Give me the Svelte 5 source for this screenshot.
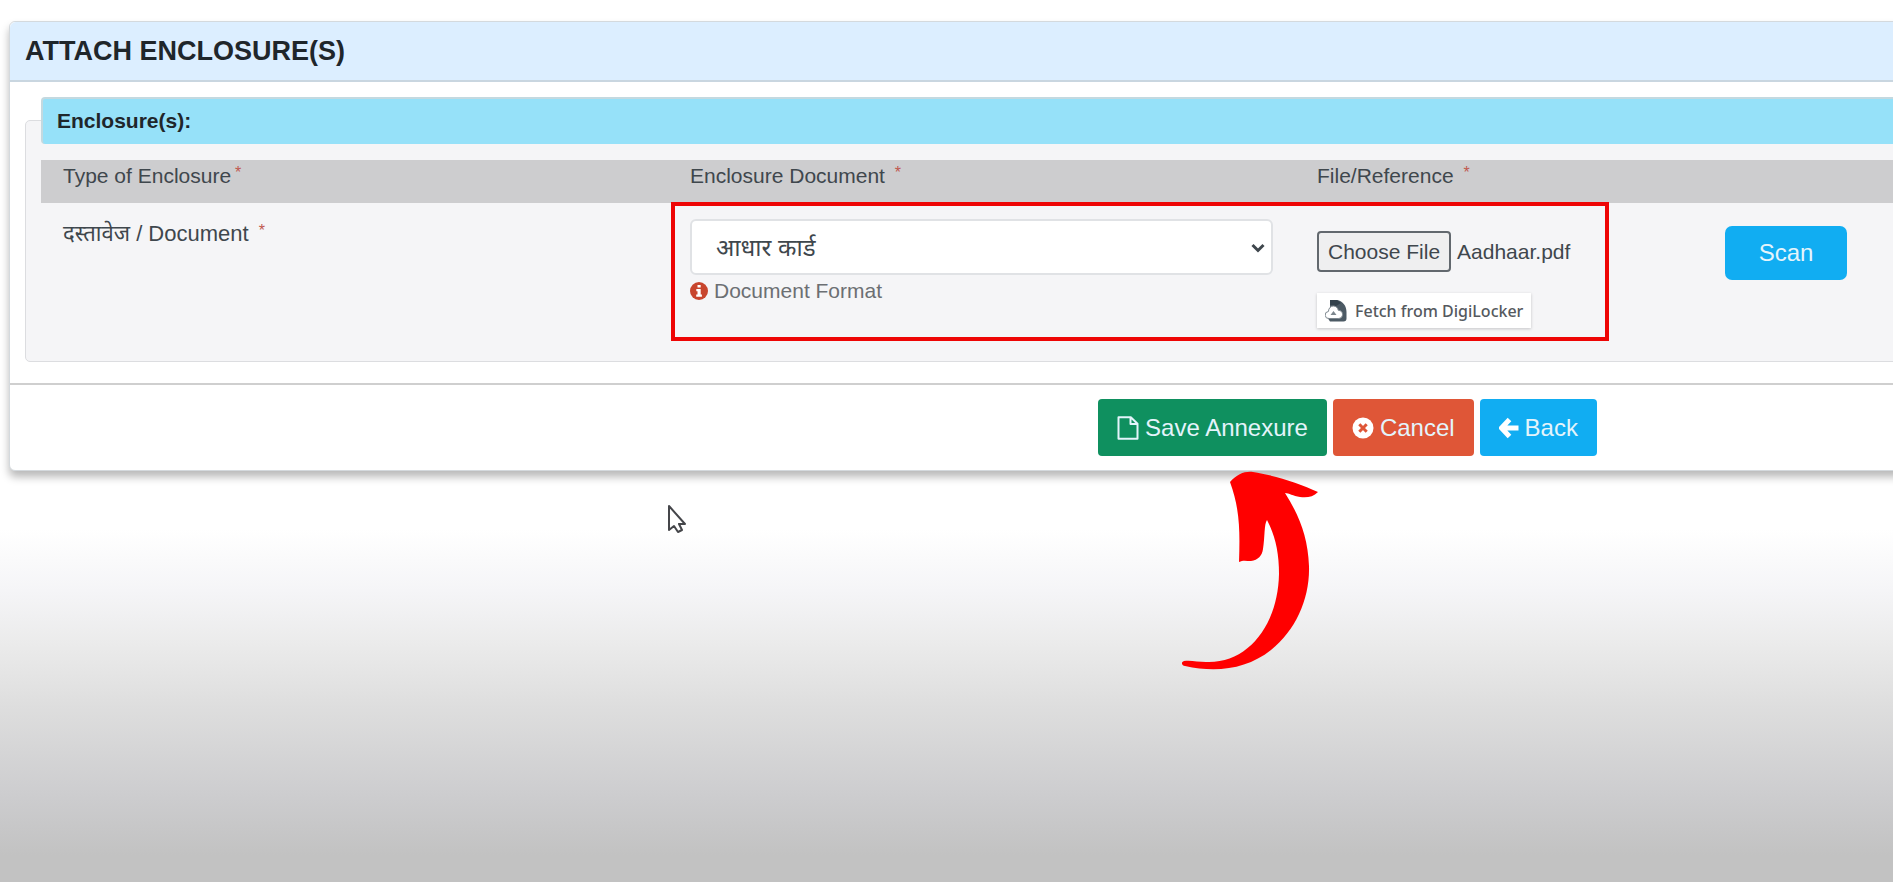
<script>
	import { onMount } from 'svelte';

	const documents = ['आधार कार्ड', 'पैन कार्ड', 'राशन कार्ड'];

	let selected = documents[0];
	let fileInput;

	onMount(() => {
		const transfer = new DataTransfer();
		transfer.items.add(new File([''], 'Aadhaar.pdf', { type: 'application/pdf' }));
		fileInput.files = transfer.files;
	});
</script>

<main>
	<section class="card">
		<header>
			<h1>ATTACH ENCLOSURE(S)</h1>
		</header>

		<div class="card-body">
			<div class="group">
				<h2>Enclosure(s):</h2>
				<div class="table-wrap">
					<table>
						<thead>
							<tr>
								<th>Type of Enclosure <span class="required near">*</span></th>
								<th>Enclosure Document <span class="required">*</span></th>
								<th>File/Reference <span class="required">*</span></th>
							</tr>
						</thead>
						<tbody>
							<tr>
								<td>
									<label class="type" for="document">दस्तावेज / Document <span class="required">*</span></label>
								</td>
								<td>
									<div class="select-wrap">
										<select id="document" bind:value={selected}>
											{#each documents as name}
												<option value={name}>{name}</option>
											{/each}
										</select>
										<svg class="chevron" viewBox="0 0 14 10" aria-hidden="true">
											<path d="M1.5 2l5.500 5.500L12.500 2" fill="none" stroke="#3f474d" stroke-width="3" />
										</svg>
									</div>
									<a class="format" href="#format">
										<svg viewBox="0 0 18 18" aria-hidden="true">
											<circle cx="9" cy="9" r="9" fill="#c8452d" />
											<path d="M7.500 3h3.200v2.600H7.500zM6.300 7h4.400v5.500h1.200v2.200H6.200v-2.200h1.300V9.200H6.300z" fill="#fff" />
										</svg>
										Document Format
									</a>
								</td>
								<td>
									<div class="reference">
										<div class="sources">
											<input type="file" aria-label="File/Reference" bind:this={fileInput} />
											<button class="fetch" type="button">
												<svg viewBox="0 0 22 22" aria-hidden="true">
													<path d="M5 0h7c6 1 9.500 6 9.500 12v6.500a3 3 0 0 1-3 3H5L2 17l3-8z" fill="#4c5a64" />
													<path d="M5 0h7l4 3-5 3-6-1z" fill="#34424c" />
													<path d="M4 18.500a3.500 3.500 0 0 1-.6-7c.3-3.500 2.300-5.500 4.900-5.500 2.700 0 4.500 1.800 5 4.300 2.700.1 4.300 1.900 4.300 4.100s-1.700 4.100-4.200 4.100z" fill="#fff" stroke="#7d878e" />
													<path d="M8.500 11l3 4h-6z" fill="#7d878e" />
												</svg>
												Fetch from DigiLocker
											</button>
										</div>
										<button class="btn scan" type="button">Scan</button>
									</div>
								</td>
							</tr>
						</tbody>
					</table>
					<div class="highlight"></div>
				</div>
			</div>
		</div>

		<footer>
			<button class="btn save" type="button">
				<svg viewBox="0 0 22 24" aria-hidden="true">
					<path d="M1.500 1.200h12.300l6.700 6.500v15.100h-19zM13.500 1.200V8h7" fill="none" stroke="currentColor" stroke-width="2" stroke-linejoin="round" />
				</svg>
				Save Annexure
			</button>
			<button class="btn cancel" type="button">
				<svg viewBox="0 0 22 24" aria-hidden="true">
					<circle cx="11" cy="12" r="10.500" fill="#fff" />
					<path d="M7.300 8.300l7.400 7.400M14.700 8.300l-7.400 7.400" stroke="#df5637" stroke-width="3" />
				</svg>
				Cancel
			</button>
			<button class="btn back" type="button">
				<svg viewBox="0 0 20 24" aria-hidden="true">
					<path d="M10.500 3.500L2.500 12l8 8.500M3 12h16.500" fill="none" stroke="#fff" stroke-width="5" />
				</svg>
				Back
			</button>
		</footer>
	</section>

	<svg class="arrow" viewBox="0 0 136 200" aria-hidden="true">
		<path
			d="M48 11C55 3 63 0 71 1c20 3 46 11 65 20-5 5-11 6-18 5-7-1-11-4-15-4 14 22 23 44 24 73 1 32-13 64-38 84-24 19-54 23-86 16-4-1-4-4-1-5 7-1 14 1 22 1 42 2 72-37 73-88 0-22-4-39-12-54-3 4-2 17-4 29-1 7-5 11-12 12-5 0-8-1-12 1 1-30 1-53-9-80z"
			fill="#f00"
		/>
	</svg>

	<svg class="pointer" viewBox="0 0 20 30" aria-hidden="true">
		<path d="M2 2v24l5-4 4 6 4-2-3-6h6z" fill="#fff" stroke="#45464a" stroke-width="2" stroke-linejoin="round" />
	</svg>
</main>

<style>
	:global(body) {
		font-family: 'Liberation Sans', 'Noto Sans', sans-serif;
		color: #3f474d;
	}

	main {
		position: relative;
		box-sizing: border-box;
		min-height: 100vh;
		padding: 21px 0 0 9px;
		overflow: hidden;
		background: linear-gradient(#fff 0, #fff 60%, #f5f5f7 67%, #ebebeb 73%, #dedede 80%, #cdcdcf 90%, #c2c2c2 97%);
	}

	/* The form is wider than the window and runs off its right edge */
	.card {
		margin-right: -61px;
		border: 1px solid #d4d9dd;
		border-radius: 6px;
		background: #fff;
		box-shadow: 0 6px 8px rgba(0, 0, 0, 0.28);
	}

	header {
		padding: 12px 15px;
		border-bottom: 2px solid #c9d6e0;
		border-radius: 6px 6px 0 0;
		background: #dceeff;
	}

	h1,
	h2 {
		margin: 0;
		color: #1f262b;
	}

	h1 {
		font-size: 27px;
		line-height: 34px;
	}

	h2 {
		margin-top: -24px;
		padding: 0 14px 2px;
		border: 2px solid #c3d9e0;
		border-width: 2px 0 0 2px;
		border-radius: 4px;
		background: #96e1f9;
		font-size: 21px;
		line-height: 43px;
	}

	.card-body {
		padding: 38px 15px 21px;
	}

	.group {
		padding: 0 15px 20px;
		border: 1px solid #dcdde0;
		border-radius: 5px;
		background: #f5f5f7;
	}

	.table-wrap {
		position: relative;
		margin-top: 16px;
	}

	table {
		width: 100%;
		border-collapse: collapse;
		table-layout: fixed;
		font-size: 21px;
		line-height: 26px;
	}

	th {
		padding: 3px 22px 14px;
		background: #cdcdcf;
		font-weight: normal;
		text-align: left;
	}

	td {
		padding: 16px 22px 13px;
		vertical-align: top;
	}

	.type {
		display: block;
		padding-top: 2px;
		font-size: 22px;
	}

	.required {
		margin-left: 4px;
		color: #c0594f;
		font-size: 16px;
		vertical-align: top;
		line-height: 20px;
	}

	.near {
		margin-left: -2px;
	}

	.select-wrap {
		position: relative;
	}

	select {
		width: 100%;
		height: 56px;
		padding: 0 24px;
		border: 2px solid #e0e2e5;
		border-radius: 6px;
		background: #fff;
		color: #3f474d;
		font: 24px 'Liberation Sans', 'Noto Sans', sans-serif;
		appearance: none;
	}

	.chevron {
		position: absolute;
		top: 24px;
		right: 8px;
		width: 14px;
		height: 10px;
	}

	.format {
		display: flex;
		align-items: center;
		gap: 6px;
		margin-top: 3px;
		color: #6c6f73;
		text-decoration: none;
	}

	.format svg {
		width: 18px;
		height: 18px;
	}

	.reference {
		display: flex;
		gap: 96px;
		padding-top: 7px;
	}

	.sources {
		display: flex;
		flex-direction: column;
		align-items: flex-start;
		gap: 21px;
		width: 312px;
		padding-top: 5px;
	}

	input[type='file'] {
		width: 100%;
		color: #3f474d;
		font: 21px 'Liberation Sans', sans-serif;
	}

	input::file-selector-button {
		height: 41px;
		margin-right: 6px;
		padding: 0 9px;
		border: 2px solid #62686e;
		border-radius: 4px;
		background: #efeff0;
		color: #3f474d;
		font: inherit;
	}

	button {
		border: 0;
		font-family: 'Liberation Sans', sans-serif;
		cursor: pointer;
	}

	.fetch {
		display: flex;
		align-items: center;
		gap: 8px;
		height: 35px;
		padding: 0 8px;
		background: #fff;
		box-shadow: 0 1px 3px rgba(0, 0, 0, 0.2);
		color: #55595e;
		font: 500 16px 'Noto Sans', sans-serif;
	}

	.fetch svg {
		width: 22px;
		height: 22px;
	}

	.btn {
		display: flex;
		align-items: center;
		gap: 6px;
		height: 57px;
		padding: 0 19px;
		border-radius: 4px;
		color: #e4f4fb;
		font-size: 24px;
	}

	.btn svg {
		height: 24px;
	}

	.scan {
		justify-content: center;
		width: 122px;
		height: 54px;
		border-radius: 7px;
		background: #11adf2;
	}

	footer {
		display: flex;
		gap: 6px;
		padding: 14px 0 14px 56%;
		border-top: 2px solid #cfcfcf;
	}

	.save {
		background: #0f905f;
	}

	.cancel {
		background: #df5637;
	}

	.back {
		background: #11adf2;
	}

	/* Marks and pointer drawn over the form */
	.highlight {
		position: absolute;
		top: 42px;
		left: 630px;
		box-sizing: border-box;
		width: 938px;
		height: 139px;
		border: 4px solid #ee0505;
		pointer-events: none;
	}

	.arrow {
		position: absolute;
		top: 471px;
		left: 1182px;
		width: 136px;
		height: 200px;
	}

	.pointer {
		position: absolute;
		top: 504px;
		left: 667px;
		width: 20px;
		height: 30px;
	}
</style>
